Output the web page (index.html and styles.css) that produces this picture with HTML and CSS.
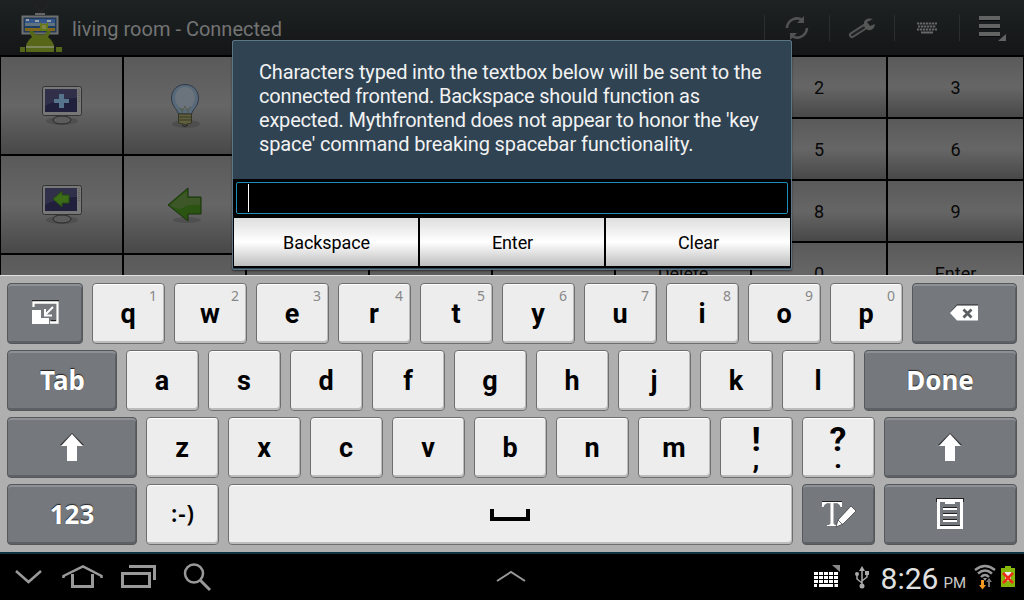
FILE: index.html
```html
<!DOCTYPE html>
<html lang="en">
<head>
<meta charset="utf-8">
<title>living room - Connected</title>
<link rel="stylesheet" href="styles.css">
</head>
<body>
<main class="app">
  <header class="bar">
    <svg class="logo" width="44" height="50" viewBox="0 0 44 50">
      <path d="M15 3l6 7 7-7" stroke="#2e2828" fill="none"/>
      <path d="M15 11h10v2H15z" fill="#666"/>
      <path d="M2.500 14.500h35v17h-35z" fill="#233958" stroke="#707070" stroke-width="2"/>
      <path d="M5 17h30v4H5z" fill="#35568a"/><path d="M5 21h30v3H5z" fill="#60727d"/>
      <path d="M5 24h30v5H5z" fill="#80671c"/><path d="M5 24h30v2H5z" fill="#1c3d65"/>
      <path d="M6 17h3v2H6zM15 18h4v2h-4zM27 18h4v2h-4z" fill="#98a2a8"/>
      <path d="M20 20l2 2h4l2-2v9h-8z" fill="#657817"/><path d="M22 23h4v4h-4z" fill="#80834c"/>
      <path d="M9 30l3-2 4 5q4-1 8 0l4-5 3 2-3 5q5 4 6 9H6q1-5 6-9z" fill="#566719"/>
      <path d="M6 44h28v2H6z" fill="#7d865a"/><path d="M6 46h28v4H6zM0 45h5v5H0zM36 45h6v5h-6z" fill="#566719"/>
    </svg>
    <h1 class="title">living room - Connected</h1>
    <nav class="actions">
      <span class="action"><svg width="26" height="26" viewBox="0 0 26 26"><g fill="none" stroke="#515353" stroke-width="2.600"><path d="M3 13a10 10 0 0 1 16-7.500"/><path d="M23 13a10 10 0 0 1-16 7.500"/></g><path d="M20 1v7h-7zM6 25v-7h7z" fill="#515353"/></svg></span>
      <span class="action"><svg width="28" height="22" viewBox="0 0 28 22"><path d="M4 18L18 9" stroke="#555757" stroke-width="6" stroke-linecap="round"/><path d="M4 18L16 10.500" stroke="#202323" stroke-width="2.200" stroke-linecap="round"/><path d="M25 2q-7-2-9 3-1 6 4 8 6 1 7-6l-5 2-3-4z" fill="#555757"/></svg></span>
      <span class="action"><svg width="20" height="12" viewBox="0 0 20 12"><path d="M0 1.500h20M1 4.500h18M0 7.500h20" stroke="#666" stroke-width="2" stroke-dasharray="2.300 .7"/><path d="M4 10.500h12" stroke="#666" stroke-width="2"/></svg></span>
      <span class="action"><svg width="28" height="28" viewBox="0 0 28 28"><path d="M0 4h21M0 12h21M0 20h21" stroke="#626464" stroke-width="4"/><path d="M0 6.500h21M0 14.500h21M0 22.500h21" stroke="#08090a"/><path d="M27 20v7h-8z" fill="#626464"/></svg></span>
    </nav>
  </header>
  <section class="remote">
    <div class="pad pad-icons">
      <div class="cell"><svg width="42" height="42" viewBox="0 0 42 42"><ellipse cx="21" cy="36" rx="16" ry="4" fill="#0002"/><ellipse cx="21" cy="35" rx="9" ry="4" fill="#5c5c5c" stroke="#292929"/><rect x="1.500" y="1.500" width="39" height="29" rx="2" fill="#777" stroke="#333"/><path d="M4 4h32v23H4z" fill="#20203c"/><path d="M4 4h32v9Q18 13 4 21z" fill="#30304b"/><path d="M38 4v14" stroke="#555" stroke-dasharray="1 1"/><path d="M18 9h5v5h5v4h-5v5h-5v-5h-5v-4h5z" fill="#56758d"/></svg></div>
      <div class="cell"><svg width="32" height="46" viewBox="0 0 32 46"><ellipse cx="17" cy="41" rx="14" ry="4" fill="#0002"/><path d="M16 1.500C7.500 1.500 2.500 8 2.500 15c0 8 5 10 7 16h13c2-6 7-8 7-16C29.500 8 24.500 1.500 16 1.500z" fill="#586979" stroke="#303846"/><ellipse cx="16" cy="15" rx="10" ry="11" fill="#6b747c"/><path d="M10 25l4 2 2-4 2 4 4-3M13 31v-5M19 31v-5" stroke="#555b44" fill="none"/><path d="M9.500 31h13v9q-6 3-13 0z" fill="#60603f" stroke="#343524"/><path d="M10 34h12M10 37h12" stroke="#373824"/><path d="M13 42q3 3 6 0" fill="none" stroke="#222"/></svg></div>
      <div class="cell"></div><div class="cell"></div><div class="cell"></div>
      <div class="cell"><svg width="42" height="42" viewBox="0 0 42 42"><ellipse cx="21" cy="36" rx="16" ry="4" fill="#0002"/><ellipse cx="21" cy="35" rx="9" ry="4" fill="#5c5c5c" stroke="#292929"/><rect x="1.500" y="1.500" width="39" height="29" rx="2" fill="#777" stroke="#333"/><path d="M4 4h32v23H4z" fill="#20203c"/><path d="M4 4h32v9Q18 13 4 21z" fill="#30304b"/><path d="M38 4v14" stroke="#555" stroke-dasharray="1 1"/><path d="M12 15l9-8v4h7v8h-7v4z" fill="#3d6c18" stroke="#244b10"/></svg></div>
      <div class="cell"><svg width="36" height="36" viewBox="0 0 36 36"><ellipse cx="20" cy="33" rx="14" ry="3" fill="#0002"/><path d="M1 18L21 1v9h13v17H21v7z" fill="#2b5312" stroke="#173308"/><path d="M3 18L20 4v7h13v7q-13-1-17 3-6 2-12-2z" fill="#3d5728"/></svg></div>
      <div class="cell"></div><div class="cell"></div><div class="cell"></div>
      <div class="cell"></div><div class="cell"></div><div class="cell"></div><div class="cell"></div><div class="cell"></div>
    </div>
    <div class="pad pad-numbers">
      <div class="cell"></div><div class="cell">2</div><div class="cell">3</div>
      <div class="cell"></div><div class="cell">5</div><div class="cell">6</div>
      <div class="cell"></div><div class="cell">8</div><div class="cell">9</div>
      <div class="cell">Delete</div><div class="cell">0</div><div class="cell">Enter</div>
    </div>
  </section>
</main>

<section class="dialog">
  <p class="message"><span class="tight">Characters typed into the textbox below will be sent to the</span><br><span class="tighter">connected frontend. Backspace should function as</span><br><span class="tighter">expected. Mythfrontend does not appear to honor the 'key</span><br><span class="snug">space' command breaking spacebar functionality.</span></p>
  <div class="entry"><div class="field"><i class="caret"></i></div></div>
  <div class="buttons"><button>Backspace</button><button>Enter</button><button>Clear</button></div>
</section>

<section class="keyboard">
  <div class="row">
    <div class="key dark w76"><svg width="30" height="27" viewBox="0 0 30 27"><path d="M2.500 9V3.500h24v20H20" fill="none" stroke="#222" stroke-width="3" transform="translate(0 -1)"/><path d="M2.500 8V3.500h24v20H19" fill="none" stroke="#fff" stroke-width="2.500"/><path d="M1 11h9v8h8v6H1z" fill="#fff"/><path d="M22 8l-7 7M14 10v6.500h7" fill="none" stroke="#fff" stroke-width="2"/></svg></div>
    <div class="key">q<sup>1</sup></div><div class="key">w<sup>2</sup></div><div class="key">e<sup>3</sup></div><div class="key">r<sup>4</sup></div><div class="key">t<sup>5</sup></div><div class="key">y<sup>6</sup></div><div class="key">u<sup>7</sup></div><div class="key">i<sup>8</sup></div><div class="key">o<sup>9</sup></div><div class="key">p<sup>0</sup></div>
    <div class="key dark grow"><svg width="30" height="18" viewBox="0 0 30 18"><path d="M1 8.500L8 .5h21V3H8z" fill="#222"/><path d="M1 9l7-7.500h21v15H8z" fill="#fff"/><path d="M14.500 5.500l8 8M22.500 5.500l-8 8" stroke="#5c5f62" stroke-width="2.800"/></svg></div>
  </div>
  <div class="row">
    <div class="key dark w110">Tab</div>
    <div class="key">a</div><div class="key">s</div><div class="key">d</div><div class="key">f</div><div class="key">g</div><div class="key">h</div><div class="key">j</div><div class="key">k</div><div class="key">l</div>
    <div class="key dark grow">Done</div>
  </div>
  <div class="row">
    <div class="key dark w130"><svg width="24" height="28" viewBox="0 0 24 28"><path d="M12 0l12 12H0z" fill="#333"/><path d="M12 1l11 12h-6v15H7V13H1z" fill="#fff"/></svg></div>
    <div class="key">z</div><div class="key">x</div><div class="key">c</div><div class="key">v</div><div class="key">b</div><div class="key">n</div><div class="key">m</div>
    <div class="key pair"><span class="big">!</span><span class="small">,</span></div><div class="key pair"><span class="big">?</span><span class="small">.</span></div>
    <div class="key dark grow"><svg width="24" height="28" viewBox="0 0 24 28"><path d="M12 0l12 12H0z" fill="#333"/><path d="M12 1l11 12h-6v15H7V13H1z" fill="#fff"/></svg></div>
  </div>
  <div class="row">
    <div class="key dark w130">123</div>
    <div class="key smile">:-)</div>
    <div class="key space"><svg width="40" height="12" viewBox="0 0 40 12"><path d="M2 0v10h36V0" fill="none" stroke="#000" stroke-width="4"/></svg></div>
    <div class="key dark"><svg width="36" height="28" viewBox="0 0 36 28"><path d="M1 1h20v3H1z" fill="#222"/><path d="M1 2h20v5h-1.500q-.5-3-3-3.500H12.500V23q0 2 3.500 2v1H6v-1q3.500 0 3.500-2V3.500H6Q3 4 2.500 7H1z" fill="#fff"/><path d="M17 20L30 6l5 5-13 13-7 3z" fill="#fff" stroke="#333" stroke-width=".7"/><path d="M17 20l5 5" stroke="#444" stroke-width=".8"/></svg></div>
    <div class="key dark grow"><svg width="28" height="32" viewBox="0 0 28 32"><path d="M0 0h28v4H0z" fill="#222"/><path d="M2.500 2.500h23v27h-23z" fill="none" stroke="#fff" stroke-width="3"/><path d="M9 2h10v4H9z" fill="#fff"/><path d="M7 9.500h14M7 15.500h14M7 21.500h14M4 27.500h20" stroke="#222"/><path d="M7 11h14M7 17h14M7 23h14" stroke="#fff" stroke-width="2"/></svg></div>
  </div>
</section>

<footer class="system">
  <svg class="softkeys" width="220" height="46" viewBox="0 0 220 46" fill="none" stroke="#999" stroke-width="3">
    <path d="M16 17l12.500 11L41 17" stroke-width="2.500"/>
    <path d="M63.500 24v-2L83 12.500l18.500 9.500v2" stroke-width="2.500"/><path d="M72.500 20v12.500h20V20"/>
    <path d="M122.500 19.500h27v13h-27z"/><path d="M129 12.500h25.500V26"/>
    <circle cx="194" cy="19.500" r="9" stroke-width="2.500"/><path d="M200 26l10 10" stroke-width="3"/>
  </svg>
  <svg class="up" width="32" height="14" viewBox="0 0 32 14"><path d="M2 11l14-9 14 9" fill="none" stroke="#999" stroke-width="2"/></svg>
  <div class="status">
    <svg width="28" height="24" viewBox="0 0 28 24"><path d="M1 8.500h24M1 12.500h24M1 16.500h24" stroke="#fff" stroke-width="3" stroke-dasharray="4 1"/><path d="M1 20.500h3M6 20.500h14M21.500 20.500h3.500" stroke="#fff" stroke-width="3"/><path d="M19 0h8v7z" fill="#888"/></svg>
    <svg class="usb" width="16" height="24" viewBox="0 0 16 24"><g fill="none" stroke="#aaa" stroke-width="1.500"><path d="M8 2v18M8 17l-5-4V9M8 15l5-4V7"/></g><path d="M8 0l3 5H5zM11 5h4v4h-4z" fill="#aaa"/><circle cx="3" cy="8" r="2" fill="#aaa"/><circle cx="8" cy="20" r="2.500" fill="#aaa"/></svg>
    <span class="time">8:26</span><span class="pm">PM</span>
    <svg class="wifi" width="22" height="26" viewBox="0 0 22 26"><g fill="none" stroke="#999" stroke-width="2.400"><path d="M1 6q10-8 20 0"/><path d="M4 9.500q7-6 14 0"/><path d="M7 13q4-4 8 0"/></g><path d="M9 14h4l-2 3z" fill="#999"/><path d="M7 16h3v5h2l-3.500 4.500L5 21h2z" fill="#f39b20"/><path d="M14 23v-5h-2l3-4 3 4h-2v5z" fill="#777"/></svg>
    <svg class="battery" width="14" height="22" viewBox="0 0 14 22"><path d="M4 0h6v2h4v19H0V2h4z" fill="#85b80a"/><path d="M4 6h6v9H4z" fill="#eee"/><path d="M2 7l10 10M12 7L2 17" stroke="#f02c18" stroke-width="2.500"/></svg>
  </div>
</footer>
</body>
</html>
```
FILE: styles.css
```css
* { box-sizing: border-box; }
body { margin: 0; width: 1024px; height: 600px; overflow: hidden; background: #000; font-family: Roboto, sans-serif; display: flex; flex-direction: column; position: relative; }
svg { display: block; flex: none; }

.app { height: 275px; overflow: hidden; flex: none; }
.bar { height: 55px; display: flex; align-items: center; background: linear-gradient(#1e2223, #141617); padding-left: 20px; }
.logo { align-self: flex-start; margin-top: 2px; }
.title { margin: 3px 0 0 8px; font-size: 20px; font-weight: 400; color: #737474; white-space: nowrap; }
.actions { margin-left: auto; display: flex; align-items: center; }
.action { width: 65px; height: 26px; display: flex; align-items: center; justify-content: center; border-left: 1px solid #2b2e2f; }
.action:last-child { padding-left: 2px; padding-top: 1px; }

.remote { display: flex; gap: 2px; padding: 2px 1px 0; height: 300px; }
.pad { display: grid; gap: 2px; flex: none; }
.pad-icons { grid-template-columns: repeat(5, 121px); grid-template-rows: repeat(3, 97px); }
.pad-numbers { grid-template-columns: 134px 134px 135px; grid-template-rows: repeat(4, 60px); height: 246px; }
.cell { display: flex; align-items: center; justify-content: center; background: linear-gradient(#5a5a5a, #666 50%, #484848); font-size: 18px; color: #080808; }

.dialog { position: absolute; left: 232px; top: 40px; width: 560px; height: 230px; border: 1px solid #5b7687; border-radius: 2px; background: #2f4353; box-shadow: 0 1px 2px #0008; }
.message { margin: 0; height: 138px; padding: 19px 0 0 26px; font-size: 20px; line-height: 24px; color: #f2f2f2; white-space: nowrap; }
.tight { letter-spacing: -.17px; }
.tighter { letter-spacing: -.21px; }
.snug { letter-spacing: -.12px; }
.entry { height: 38px; background: #000; padding: 3px 3px; }
.field { height: 32px; border: 1px solid #1f8db9; border-radius: 2px; padding: 1px 11px; }
.caret { display: block; width: 1px; height: 28px; background: #fff; }
.buttons { display: flex; gap: 2px; height: 51px; padding: 1px 1px 2px; background: #000; }
.buttons button { flex: 1; border: 0; padding: 0 0 0 1px; font: 18px Roboto, sans-serif; letter-spacing: -.1px; color: #000; background: linear-gradient(#dedede, #fff 50%, #bebebe); }

.keyboard { height: 277px; flex: none; background: #afafaf; border-top: 1px solid #e0e0e0; padding: 7px; display: flex; flex-direction: column; gap: 6px; }
.row { display: flex; gap: 9px; height: 61px; }
.key { position: relative; width: 73px; height: 61px; flex: none; border: 1px solid #6e6e6e; border-radius: 4px; background: #ededed; box-shadow: inset -1px -2px 0 #bcbcbc, inset 0 1px 0 #fff; display: flex; align-items: center; justify-content: center; font-size: 27px; font-weight: 700; color: #000; padding-right: 1px; }
.key sup { position: absolute; right: 7px; top: 3px; font: 14px/18px "Noto Sans", sans-serif; color: #888; }
.dark { background: #75797e; border-color: #55585b; color: #fff; font-family: "Noto Sans", sans-serif; font-size: 26px; text-shadow: 0 -1px 1px #222; box-shadow: inset 0 2px 0 #8d9195, inset -1px -2px 0 #5d6064; padding: 0 0 2px; }
.dark.grow { padding-right: 1px; }
.w76 { width: 76px; padding-left: 1px; }
.w110 { width: 110px; padding-left: 1px; }
.w130 { width: 130px; }
.grow { flex: 1; width: auto; }
.space { width: 565px; padding-right: 2px; }
.smile { font-family: "Noto Sans", sans-serif; font-size: 23px; font-weight: 600; letter-spacing: 1px; padding: 0 0 3px 1px; }
.pair { flex-direction: column; justify-content: flex-start; padding-top: 2px; }
.big { font-size: 34px; line-height: 38px; height: 38px; }
.small { font-size: 28px; line-height: 14px; height: 14px; margin-top: -6px; }

.system { height: 48px; flex: none; background: #000; border-top: 2px solid #0c3344; display: grid; grid-template-columns: 495px 32px 1fr; align-items: center; }
.softkeys { align-self: start; }
.status { display: flex; align-items: center; justify-content: flex-end; padding-right: 9px; height: 46px; color: #e0e0e0; }
.usb { margin: 2px 11px 0 13px; }
.time { font-size: 30px; line-height: 46px; padding-top: 3px; }
.pm { font-size: 15px; margin: 12px 8px 0 5px; color: #ccc; }
.wifi { margin-right: 5px; }
```
